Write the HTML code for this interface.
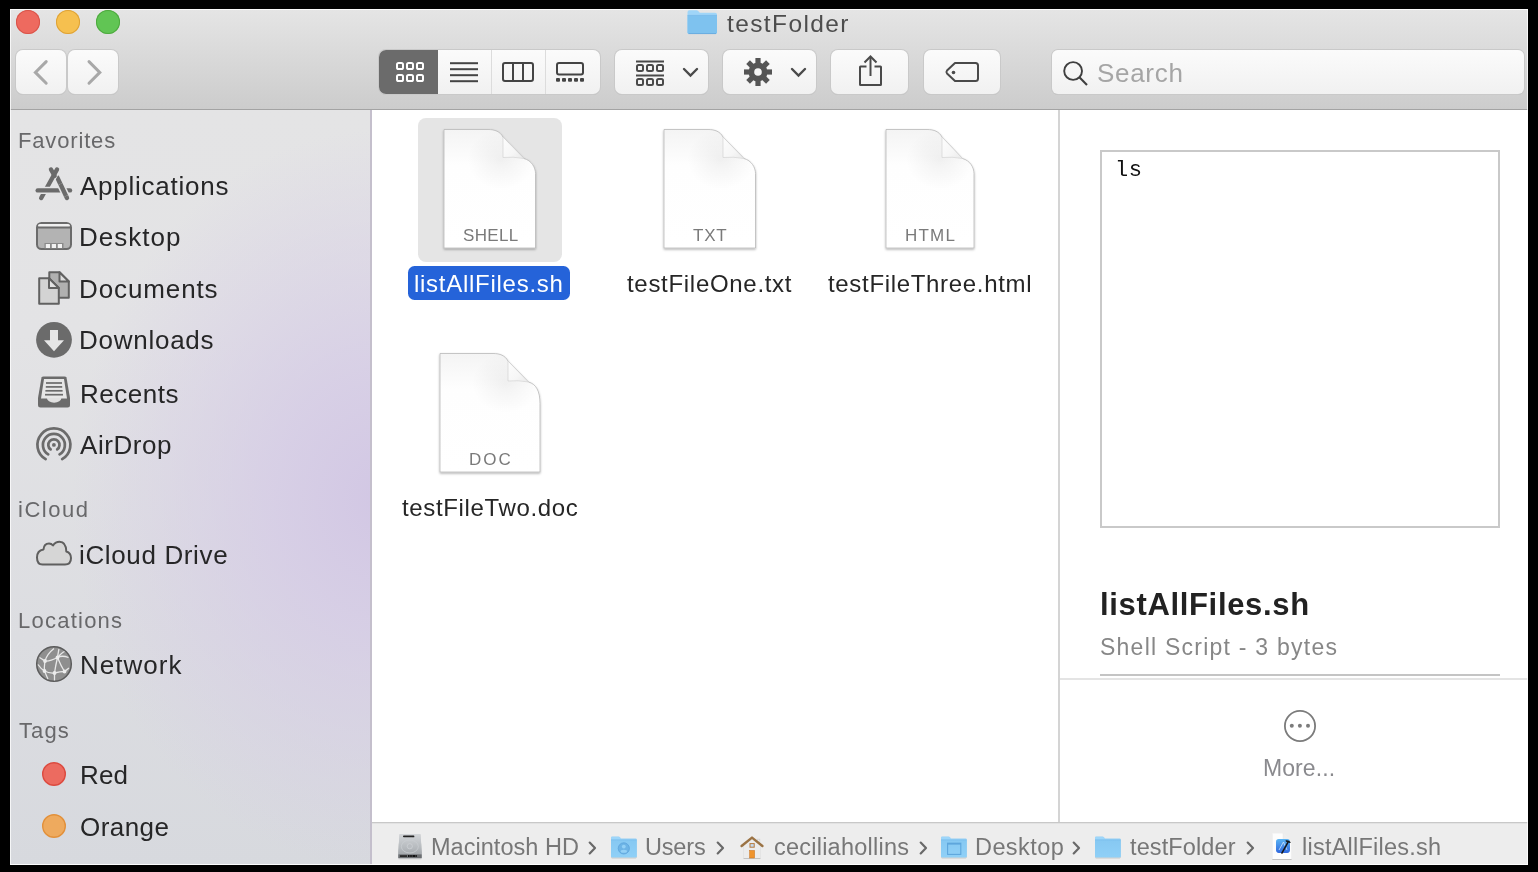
<!DOCTYPE html>
<html><head><meta charset="utf-8">
<style>
*{margin:0;padding:0;box-sizing:border-box}
html,body{width:1538px;height:872px;background:#000;overflow:hidden;font-family:"Liberation Sans",sans-serif}
.abs{position:absolute}
#win{position:absolute;left:10px;top:9px;width:1518px;height:856px;background:#fff;overflow:hidden}
#toolbar{position:absolute;left:0;top:0;width:1518px;height:101px;background:linear-gradient(#e5e5e5,#cccccc);border-bottom:1px solid #a3a3a3}
.tl{position:absolute;top:1px;width:24px;height:24px;border-radius:50%}
.btn{position:absolute;top:40.5px;height:44.5px;border-radius:7px;background:linear-gradient(#fbfbfb,#f1f1f1);box-shadow:0 0 0 1px #c9c9c9,0 1px 0 0 #b9b9b9}
.title{position:absolute;top:2px;left:716px;font-size:24.5px;letter-spacing:1.45px;color:#4d4d4d;line-height:28px}
#sidebar{position:absolute;left:0;top:101px;width:362px;height:755px;background:radial-gradient(ellipse 310px 370px at 372px 390px,#d2c7e4 0%,rgba(213,203,230,0.8) 35%,rgba(222,220,230,0) 100%),linear-gradient(#e4e4e5 0%,#e3e3e5 30%,#dcdde1 70%,#d7d9de 100%);border-right:2px solid #c4bfcc}
.hdr{position:absolute;left:9px;font-size:21px;letter-spacing:0.6px;color:#6f6f72}
.item{position:absolute;left:71px;font-size:26px;letter-spacing:0.45px;color:#282829}
.ic{position:absolute;left:26px}
#main{position:absolute;left:362px;top:101px;width:686px;height:712px;background:#fff}
#preview{position:absolute;left:1048px;top:101px;width:470px;height:712px;background:#fff;border-left:2px solid #d4d4d4}
#pathbar{position:absolute;left:362px;top:813px;width:1156px;height:43px;background:#ededed;border-top:1px solid #c8c8c8;box-shadow:inset 0 1px 0 #e2e2e2}
.pt{position:absolute;top:0;font-size:23.5px;color:#767676;line-height:42px}
.fname{position:absolute;font-size:24px;letter-spacing:0.45px;color:#262626;white-space:nowrap}
</style></head><body>
<div id="win">
  <div id="toolbar">
    <div class="tl" style="left:6px;top:1px;background:#ee6a5f;box-shadow:inset 0 0 0 1px #d9544a"></div>
    <div class="tl" style="left:46px;top:1px;background:#f6c04f;box-shadow:inset 0 0 0 1px #dea237"></div>
    <div class="tl" style="left:86px;top:1px;background:#61c554;box-shadow:inset 0 0 0 1px #4ea93f"></div>
    
    <svg class="abs" style="left:676px;top:0px" width="33" height="27" viewBox="0 0 33 27">
      <path d="M1.5 3.2 Q1.5 1.3 3.4 1.3 L10.6 1.3 Q11.6 1.3 12.4 2.2 L13.8 3.8 L29.2 3.8 Q31 3.8 31 5.6 L31 23.2 Q31 24.8 29.4 24.8 L3.1 24.8 Q1.5 24.8 1.5 23.2 Z" fill="#9fd5f8"/>
      <path d="M1.5 6.6 L31 6.6 L31 23.2 Q31 24.8 29.4 24.8 L3.1 24.8 Q1.5 24.8 1.5 23.2 Z" fill="#7ec2ef"/>
      <line x1="1.5" y1="6.4" x2="31" y2="6.4" stroke="#6fb4e4" stroke-width="0.6"/>
      <line x1="2.5" y1="24.6" x2="30" y2="24.6" stroke="#5fa5da" stroke-width="0.8"/>
    </svg>
    <!-- back/forward -->
    <div class="btn" style="left:6px;width:50px"></div>
    <div class="btn" style="left:58px;width:50px"></div>
    <svg class="abs" style="left:6px;top:41px" width="102" height="45">
      <path d="M30.2 11.6 L19.4 22.4 L30.2 33.2" fill="none" stroke="#a8a8a8" stroke-width="3" stroke-linecap="round" stroke-linejoin="miter"/>
      <path d="M73 11.6 L83.8 22.4 L73 33.2" fill="none" stroke="#a8a8a8" stroke-width="3" stroke-linecap="round" stroke-linejoin="miter"/>
    </svg>
    <!-- view segmented -->
    <div class="btn" style="left:369px;width:221px;overflow:hidden">
      <div class="abs" style="left:0;top:0;width:59px;height:45px;background:#6b6b6b"></div>
      <div class="abs" style="left:112px;top:0;width:1px;height:45px;background:#dcdcdc"></div>
      <div class="abs" style="left:166px;top:0;width:1px;height:45px;background:#dcdcdc"></div>
    </div>
    <svg class="abs" style="left:369px;top:41px" width="221" height="45">
      <g fill="none" stroke="#fff" stroke-width="2">
        <rect x="18" y="13" width="6" height="6" rx="1.6"/><rect x="28" y="13" width="6" height="6" rx="1.6"/><rect x="38" y="13" width="6" height="6" rx="1.6"/>
        <rect x="18" y="25" width="6" height="6" rx="1.6"/><rect x="28" y="25" width="6" height="6" rx="1.6"/><rect x="38" y="25" width="6" height="6" rx="1.6"/>
      </g>
      <g stroke="#444" stroke-width="2">
        <line x1="71" y1="13.2" x2="99" y2="13.2"/><line x1="71" y1="19.2" x2="99" y2="19.2"/><line x1="71" y1="25.2" x2="99" y2="25.2"/><line x1="71" y1="31.2" x2="99" y2="31.2"/>
      </g>
      <g fill="none" stroke="#444" stroke-width="2">
        <rect x="124" y="13" width="30" height="18" rx="2"/><line x1="134" y1="13" x2="134" y2="31"/><line x1="144" y1="13" x2="144" y2="31"/>
        <rect x="178" y="13" width="26" height="11.5" rx="2"/>
      </g>
      <g fill="#444">
        <rect x="177" y="28" width="4" height="3.8" rx="1"/><rect x="183" y="28" width="4" height="3.8" rx="1"/><rect x="189" y="28" width="4" height="3.8" rx="1"/><rect x="195" y="28" width="4" height="3.8" rx="1"/><rect x="201" y="28" width="4" height="3.8" rx="1"/>
      </g>
    </svg>
    <!-- group -->
    <div class="btn" style="left:605px;width:93px"></div>
    <svg class="abs" style="left:605px;top:41px" width="93" height="45">
      <g stroke="#4a4a4a" stroke-width="2">
        <line x1="21" y1="11.5" x2="49" y2="11.5"/><line x1="21" y1="25.5" x2="49" y2="25.5"/>
      </g>
      <g fill="none" stroke="#4a4a4a" stroke-width="2">
        <rect x="22" y="15" width="6" height="6" rx="1.5"/><rect x="32" y="15" width="6" height="6" rx="1.5"/><rect x="42" y="15" width="6" height="6" rx="1.5"/>
        <rect x="22" y="29" width="6" height="6" rx="1.5"/><rect x="32" y="29" width="6" height="6" rx="1.5"/><rect x="42" y="29" width="6" height="6" rx="1.5"/>
      </g>
      <path d="M69 19 L75.5 25.5 L82 19" fill="none" stroke="#4a4a4a" stroke-width="2.4" stroke-linecap="round"/>
    </svg>
    <!-- action -->
    <div class="btn" style="left:713px;width:93px"></div>
    <svg class="abs" style="left:713px;top:41px" width="93" height="45">
      <g transform="translate(35,22)" fill="#555">
        <circle r="9.5"/>
        <rect x="-2.6" y="-14" width="5.2" height="28"/>
        <rect x="-2.6" y="-14" width="5.2" height="28" transform="rotate(45)"/>
        <rect x="-2.6" y="-14" width="5.2" height="28" transform="rotate(90)"/>
        <rect x="-2.6" y="-14" width="5.2" height="28" transform="rotate(135)"/>
        <circle r="3.8" fill="#f6f6f6"/>
      </g>
      <path d="M69 19 L75.5 25.5 L82 19" fill="none" stroke="#4a4a4a" stroke-width="2.4" stroke-linecap="round"/>
    </svg>
    <!-- share -->
    <div class="btn" style="left:821px;width:77px"></div>
    <svg class="abs" style="left:821px;top:41px" width="77" height="45">
      <path d="M35.5 16.5 L29.5 16.5 Q29 16.5 29 17 L29 34.5 Q29 35 29.5 35 L49.5 35 Q50 35 50 34.5 L50 17 Q50 16.5 49.5 16.5 L43.5 16.5" fill="none" stroke="#4a4a4a" stroke-width="2" stroke-linejoin="round"/>
      <line x1="39.5" y1="7" x2="39.5" y2="26" stroke="#4a4a4a" stroke-width="2"/>
      <path d="M33.5 12.5 L39.5 6.5 L45.5 12.5" fill="none" stroke="#4a4a4a" stroke-width="2"/>
    </svg>
    <!-- tag -->
    <div class="btn" style="left:914px;width:76px"></div>
    <svg class="abs" style="left:914px;top:41px" width="76" height="45">
      <path d="M31 13 L51.5 13 Q54 13 54 15.5 L54 28.5 Q54 31 51.5 31 L31 31 L23 23.5 Q21.8 22 23 20.5 Z" fill="none" stroke="#4a4a4a" stroke-width="2" stroke-linejoin="round"/>
      <circle cx="29.5" cy="22.5" r="1.8" fill="#4a4a4a"/>
    </svg>
    <!-- search -->
    <div class="btn" style="left:1042px;width:472px;top:41px;height:44px;border-radius:6px"></div>
    <svg class="abs" style="left:1042px;top:41px" width="60" height="45">
      <circle cx="21.1" cy="21" r="8.9" fill="none" stroke="#3f3f3f" stroke-width="1.9"/>
      <line x1="27.4" y1="27.3" x2="35" y2="34.9" stroke="#3f3f3f" stroke-width="2.1" stroke-linecap="butt"/>
    </svg>

  </div>
  <div id="sidebar"></div>
  <div id="main"></div>
  <div id="preview"></div>
  <div id="pathbar"></div>
</div>
<svg class="abs" style="left:0;top:0" width="400" height="872"><g fill="none"><line x1="57.3" y1="177.5" x2="67" y2="198" stroke="#6b6b6b" stroke-width="4.4" stroke-linecap="round"/><line x1="57" y1="169.5" x2="41.2" y2="198" stroke="#e4e4e5" stroke-width="7.6" stroke-linecap="butt"/><line x1="57" y1="169.5" x2="41.2" y2="198" stroke="#6b6b6b" stroke-width="4.4" stroke-linecap="round"/><line x1="51" y1="169.5" x2="54.6" y2="175.8" stroke="#6b6b6b" stroke-width="4.4" stroke-linecap="round"/><line x1="35.5" y1="190.4" x2="72.5" y2="190.4" stroke="#e4e4e5" stroke-width="7.4" stroke-linecap="butt"/><line x1="37.7" y1="190.4" x2="70" y2="190.4" stroke="#6b6b6b" stroke-width="4.4" stroke-linecap="round"/><line x1="60.4" y1="184" x2="66.05" y2="196" stroke="#e4e4e5" stroke-width="7.6" stroke-linecap="butt"/><line x1="60.4" y1="184" x2="66.05" y2="196" stroke="#6b6b6b" stroke-width="4.4" stroke-linecap="butt"/></g>
<g>
 <rect x="37" y="223" width="34" height="26" rx="4.5" fill="#b3b3b3" stroke="#6b6b6b" stroke-width="2"/>
 <rect x="38" y="224" width="32" height="3" rx="2" fill="#f0f0f0"/>
 <line x1="37" y1="227.5" x2="71" y2="227.5" stroke="#6b6b6b" stroke-width="2"/>
 <rect x="44.5" y="243" width="19" height="5.5" fill="#8a8a8a"/>
 <rect x="45.8" y="244" width="4.2" height="4" fill="#f2f2f2"/><rect x="51.8" y="244" width="4.2" height="4" fill="#f2f2f2"/><rect x="57.8" y="244" width="4.2" height="4" fill="#f2f2f2"/>
</g>
<g stroke="#616161" stroke-width="2" stroke-linejoin="round">
 <path d="M49.3 272.2 L59.5 272.2 L68.8 281.5 L68.8 297.7 L49.3 297.7 Z" fill="#b0b0b0"/>
 <path d="M59.5 272.2 L59.5 281.5 L68.8 281.5 Z" fill="#dedede"/>
 <path d="M39.2 278.2 L49 278.2 L58.8 288 L58.8 303.7 L39.2 303.7 Z" fill="#d3d3d3"/>
 <path d="M49 278.2 L49 288 L58.8 288 Z" fill="#e2e2e2"/>
</g>
<g>
 <circle cx="54" cy="339.8" r="17.9" fill="#6b6b6b"/>
 <path d="M50 330 L58 330 L58 340.2 L64 340.2 L54 351.2 L44 340.2 L50 340.2 Z" fill="#e6e6e6"/>
</g>
<g>
 <path d="M41.5 377.5 Q42 376.5 43.5 376.5 L64.5 376.5 Q66 376.5 66.5 377.5 L70 398 L70 405 Q70 407.5 67.5 407.5 L40.5 407.5 Q38 407.5 38 405 L38 398 Z" fill="#6b6b6b"/>
 <path d="M44 379 L64 379 L67 398.5 L41 398.5 Z" fill="#e6e6e6"/>
 <g stroke="#6b6b6b" stroke-width="1.7"><line x1="46" y1="383" x2="62" y2="383"/><line x1="45.8" y1="386.9" x2="62.2" y2="386.9"/><line x1="45.4" y1="390.8" x2="62.6" y2="390.8"/><line x1="45" y1="394.7" x2="63" y2="394.7"/></g>
 <path d="M46.9 398 A7.2 4.6 0 0 0 61.4 398 Z" fill="#e0e0e0"/>
</g>
<g fill="none" stroke="#6b6b6b" stroke-width="2.7" stroke-linecap="round">
 <path d="M45.65 459.19 A16.5 16.5 0 1 1 62.15 459.19"/>
 <path d="M48.23 454.33 A11 11 0 1 1 59.57 454.33"/>
 <path d="M50.61 449.43 A5.6 5.6 0 1 1 57.19 449.43"/>
</g><circle cx="53.9" cy="444.9" r="1.9" fill="#6b6b6b"/>
<path d="M42.5 564.5 Q37 564.5 37 557.5 Q37 550.5 43.5 549.5 Q44 543.5 49 543.5 Q51.5 543.5 53 545.5 Q55.5 541.8 59.5 541.8 Q66 541.8 66.3 551.5 Q71 553 71 558 Q71 564.5 65 564.5 Z" fill="#d6d6d6" stroke="#5f5f5f" stroke-width="2" stroke-linejoin="round"/>
<g>
 <circle cx="54" cy="664" r="17.3" fill="#8f8f8f" stroke="#5c5c5c" stroke-width="1.5"/>
 <g fill="none" stroke="#e8e8e8" stroke-width="1.3">
  <path d="M39.5 657.5 Q44 660.5 45 661 Q50 661.5 57.5 657.5 Q62 655 68.5 657.5"/>
  <path d="M45 661 Q47 654 54 648.5"/>
  <path d="M45 661 Q44 668 44.5 671 Q49 673.5 54.5 673 Q60 671.5 64.5 671.5 Q66.5 670 69 668"/>
  <path d="M57.5 657.5 Q58.5 651 59 649"/>
  <path d="M57.5 657.5 Q62 652.5 64.5 651.5"/>
  <path d="M57.5 657.5 Q55.5 666 54.5 673 L54.5 680.5"/>
  <path d="M57.5 657.5 Q61 666 64.5 671.5"/>
  <path d="M38 664.5 Q41 669 44.5 671 Q47 677 48 679"/>
 </g>
 <g fill="#ececec"><circle cx="45" cy="661" r="1.9"/><circle cx="57.5" cy="657.5" r="1.9"/><circle cx="44.5" cy="671" r="1.9"/><circle cx="54.5" cy="673" r="1.9"/><circle cx="64.5" cy="671.5" r="1.9"/></g>
</g>
<circle cx="54" cy="774" r="11.3" fill="#ec6b60" stroke="#dc4a3f" stroke-width="1.4"/>
<circle cx="54" cy="826" r="11.3" fill="#eeaa5e" stroke="#e2903a" stroke-width="1.4"/></svg>
<svg class="abs" style="left:0;top:0" width="1538" height="872"><defs>
<linearGradient id="pg" x1="0" y1="0" x2="0" y2="1"><stop offset="0" stop-color="#f4f4f4"/><stop offset="0.3" stop-color="#fefefe"/><stop offset="1" stop-color="#ffffff"/></linearGradient>
<linearGradient id="fl" x1="0" y1="0" x2="1" y2="1"><stop offset="0" stop-color="#fdfdfd"/><stop offset="0.6" stop-color="#f6f6f6"/><stop offset="1" stop-color="#e9e9e9"/></linearGradient>
<radialGradient id="sh" cx="0.5" cy="0.5" r="0.5"><stop offset="0" stop-color="#000" stop-opacity="0.05"/><stop offset="0.5" stop-color="#000" stop-opacity="0.025"/><stop offset="1" stop-color="#000" stop-opacity="0"/></radialGradient>
<filter id="ds" x="-20%" y="-20%" width="140%" height="140%"><feDropShadow dx="0" dy="1.2" stdDeviation="1" flood-color="#000" flood-opacity="0.32"/></filter>
</defs>
<rect x="418" y="118" width="144" height="144" rx="8" fill="#e5e5e5"/>
<clipPath id="pc1"><path d="M444 129.5 L488 129.5 C495 129.5 500 131.5 503 137.0 L524.0 158.5 C531.5 160.5 535.5 167.5 535.5 173.5 L535.5 248.0 L444 248.0 Z"/></clipPath><path d="M444 129.5 L488 129.5 C495 129.5 500 131.5 503 137.0 L524.0 158.5 C531.5 160.5 535.5 167.5 535.5 173.5 L535.5 248.0 L444 248.0 Z" fill="url(#pg)" stroke="#b9b9b9" stroke-width="0.8" filter="url(#ds)"/><g clip-path="url(#pc1)"><ellipse cx="501" cy="159.5" rx="34" ry="30" fill="url(#sh)"/></g><path d="M503 137.0 L524.0 158.5 Q513 156.5 503 157.5 Z" fill="url(#fl)" stroke="#cfcfcf" stroke-width="0.6"/>
<clipPath id="pc2"><path d="M664 129.5 L708 129.5 C715 129.5 720 131.5 723 137.0 L744.0 158.5 C751.5 160.5 755.5 167.5 755.5 173.5 L755.5 248.0 L664 248.0 Z"/></clipPath><path d="M664 129.5 L708 129.5 C715 129.5 720 131.5 723 137.0 L744.0 158.5 C751.5 160.5 755.5 167.5 755.5 173.5 L755.5 248.0 L664 248.0 Z" fill="url(#pg)" stroke="#b9b9b9" stroke-width="0.8" filter="url(#ds)"/><g clip-path="url(#pc2)"><ellipse cx="721" cy="159.5" rx="34" ry="30" fill="url(#sh)"/></g><path d="M723 137.0 L744.0 158.5 Q733 156.5 723 157.5 Z" fill="url(#fl)" stroke="#cfcfcf" stroke-width="0.6"/>
<clipPath id="pc3"><path d="M886 129.5 L927 129.5 C934 129.5 939 131.5 942 137.0 L962.5 158.5 C970 160.5 974 167.5 974 173.5 L974 248.0 L886 248.0 Z"/></clipPath><path d="M886 129.5 L927 129.5 C934 129.5 939 131.5 942 137.0 L962.5 158.5 C970 160.5 974 167.5 974 173.5 L974 248.0 L886 248.0 Z" fill="url(#pg)" stroke="#b9b9b9" stroke-width="0.8" filter="url(#ds)"/><g clip-path="url(#pc3)"><ellipse cx="940" cy="159.5" rx="34" ry="30" fill="url(#sh)"/></g><path d="M942 137.0 L962.5 158.5 Q952 156.5 942 157.5 Z" fill="url(#fl)" stroke="#cfcfcf" stroke-width="0.6"/>
<clipPath id="pc4"><path d="M440 353.5 L493 353.5 C500 353.5 505 355.5 508 361.0 L528.5 382.0 C536 384.0 540 391.0 540 403.5 L540 472.0 L440 472.0 Z"/></clipPath><path d="M440 353.5 L493 353.5 C500 353.5 505 355.5 508 361.0 L528.5 382.0 C536 384.0 540 391.0 540 403.5 L540 472.0 L440 472.0 Z" fill="url(#pg)" stroke="#b9b9b9" stroke-width="0.8" filter="url(#ds)"/><g clip-path="url(#pc4)"><ellipse cx="506" cy="383.0" rx="34" ry="30" fill="url(#sh)"/></g><path d="M508 361.0 L528.5 382.0 Q518 380.0 508 381.0 Z" fill="url(#fl)" stroke="#cfcfcf" stroke-width="0.6"/>
<rect x="408" y="266" width="162" height="34" rx="6.5" fill="#2563d9"/></svg>
<div class="abs" style="left:1100px;top:150px;width:400px;height:378px;border:2px solid #c9c9c9;background:#fff"></div>
<div class="abs" style="left:1100px;top:674px;width:400px;height:2px;background:#c4c4c4"></div>
<div class="abs" style="left:1060px;top:678px;width:468px;height:2px;background:#e4e4e4"></div>
<svg class="abs" style="left:1280px;top:706px" width="40" height="40"><circle cx="20" cy="20" r="15.1" fill="none" stroke="#7b7b7b" stroke-width="1.8"/><circle cx="11.8" cy="19.8" r="2" fill="#7b7b7b"/><circle cx="19.9" cy="19.8" r="2" fill="#7b7b7b"/><circle cx="28" cy="19.8" r="2" fill="#7b7b7b"/></svg>
<svg class="abs" style="left:0;top:0" width="1538" height="872"><defs><linearGradient id="hd" x1="0" y1="0" x2="0" y2="1"><stop offset="0" stop-color="#d3d6d9"/><stop offset="0.6" stop-color="#b4b8bc"/><stop offset="1" stop-color="#9a9ea2"/></linearGradient><linearGradient id="fd" x1="0" y1="0" x2="0" y2="1"><stop offset="0" stop-color="#86c8f2"/><stop offset="1" stop-color="#8fd0f7"/></linearGradient><linearGradient id="xc" x1="0" y1="0" x2="0" y2="1"><stop offset="0" stop-color="#5ab4f4"/><stop offset="1" stop-color="#2f68de"/></linearGradient><filter id="ds2" x="-20%" y="-20%" width="140%" height="140%"><feDropShadow dx="0" dy="0.6" stdDeviation="0.5" flood-color="#000" flood-opacity="0.3"/></filter></defs>
<g filter="url(#ds2)"><path d="M399.5 834 L420.5 834 L421.8 852 L421.8 857.5 Q421.8 858.2 421 858.2 L399 858.2 Q398.2 858.2 398.2 857.5 L398.2 852 Z" fill="url(#hd)"/></g>
<rect x="403" y="835.6" width="10.5" height="1.6" rx="0.8" fill="#222"/><circle cx="413.5" cy="836.4" r="0.9" fill="#222"/>
<ellipse cx="409.8" cy="846.5" rx="8.5" ry="6.5" fill="none" stroke="#c9cdd0" stroke-width="0.8"/><circle cx="409.8" cy="846.3" r="2.6" fill="#b9bdc1" stroke="#d8dbde" stroke-width="0.5"/>
<rect x="398.4" y="854.4" width="23.2" height="3.6" fill="#6b6e71"/><rect x="400" y="855.2" width="7" height="1.8" fill="#2a2a2a"/><rect x="408" y="855" width="1.6" height="2" fill="#111"/><rect x="410.2" y="855" width="1.6" height="2" fill="#111"/><rect x="412.4" y="855" width="2.6" height="2" fill="#111"/><rect x="415.4" y="855" width="1.4" height="2" fill="#111"/>
<path d="M589.7 842.6 L595 848 L589.7 853.4" fill="none" stroke="#696969" stroke-width="2.2" stroke-linecap="round" stroke-linejoin="round"/>
<path d="M717.7 842.6 L723 848 L717.7 853.4" fill="none" stroke="#696969" stroke-width="2.2" stroke-linecap="round" stroke-linejoin="round"/>
<path d="M920.7 842.6 L926 848 L920.7 853.4" fill="none" stroke="#696969" stroke-width="2.2" stroke-linecap="round" stroke-linejoin="round"/>
<path d="M1073.7 842.6 L1079 848 L1073.7 853.4" fill="none" stroke="#696969" stroke-width="2.2" stroke-linecap="round" stroke-linejoin="round"/>
<path d="M1247.7 842.6 L1253 848 L1247.7 853.4" fill="none" stroke="#696969" stroke-width="2.2" stroke-linecap="round" stroke-linejoin="round"/>
<g filter="url(#ds2)"><path d="M611 837.6 Q611 836.4 612.2 836.4 L618.5 836.4 Q619.3 836.4 620 837.1999999999999 L621 838.4 L635.7 838.4 Q636.7 838.4 636.7 839.4 L636.7 856.1999999999999 Q636.7 857.1999999999999 635.7 857.1999999999999 L612 857.1999999999999 Q611 857.1999999999999 611 856.1999999999999 Z" fill="#9dd6fa"/><path d="M611 840.0 L636.7 840.0 L636.7 856.1999999999999 Q636.7 857.1999999999999 635.7 857.1999999999999 L612 857.1999999999999 Q611 857.1999999999999 611 856.1999999999999 Z" fill="url(#fd)"/><line x1="611" y1="839.8" x2="636.7" y2="839.8" stroke="#6fb6e6" stroke-width="0.6"/></g>
<circle cx="623.8" cy="848.4" r="5.6" fill="#6db4e6" stroke="#5aa2da" stroke-width="0.8"/><circle cx="623.8" cy="846.6" r="1.9" fill="#93d0f6"/><ellipse cx="623.8" cy="851.2" rx="3.2" ry="1.5" fill="#93d0f6"/>
<g filter="url(#ds2)"><path d="M743.5 845 L752 839 L760.5 845 L760.5 858 L743.5 858 Z" fill="#ececec"/></g>
<rect x="757.2" y="839.2" width="2.6" height="3.4" fill="none" stroke="#d0d0d0" stroke-width="0.7"/>
<path d="M741.6 846 L752 837.6 L762.4 846" fill="none" stroke="#9b7344" stroke-width="2.4" stroke-linecap="round" stroke-linejoin="round"/>
<rect x="750" y="843.6" width="4.2" height="3.6" fill="#c4dcf4" stroke="#b87a3a" stroke-width="1"/><rect x="749.6" y="850.4" width="5" height="7.6" fill="#ef942d" stroke="#c7731f" stroke-width="0.5"/>
<g filter="url(#ds2)"><path d="M941 837.6 Q941 836.4 942.2 836.4 L948.5 836.4 Q949.3 836.4 950 837.1999999999999 L951 838.4 L965.7 838.4 Q966.7 838.4 966.7 839.4 L966.7 856.1999999999999 Q966.7 857.1999999999999 965.7 857.1999999999999 L942 857.1999999999999 Q941 857.1999999999999 941 856.1999999999999 Z" fill="#9dd6fa"/><path d="M941 840.0 L966.7 840.0 L966.7 856.1999999999999 Q966.7 857.1999999999999 965.7 857.1999999999999 L942 857.1999999999999 Q941 857.1999999999999 941 856.1999999999999 Z" fill="url(#fd)"/><line x1="941" y1="839.8" x2="966.7" y2="839.8" stroke="#6fb6e6" stroke-width="0.6"/></g>
<rect x="947.6" y="843.2" width="13.2" height="11.2" fill="none" stroke="#5ea6dc" stroke-width="1.1"/><rect x="947.6" y="843" width="13.2" height="1.6" fill="#5ea6dc"/>
<g filter="url(#ds2)"><path d="M1095 837.6 Q1095 836.4 1096.2 836.4 L1102.5 836.4 Q1103.3 836.4 1104 837.1999999999999 L1105 838.4 L1119.7 838.4 Q1120.7 838.4 1120.7 839.4 L1120.7 856.1999999999999 Q1120.7 857.1999999999999 1119.7 857.1999999999999 L1096 857.1999999999999 Q1095 857.1999999999999 1095 856.1999999999999 Z" fill="#9dd6fa"/><path d="M1095 840.0 L1120.7 840.0 L1120.7 856.1999999999999 Q1120.7 857.1999999999999 1119.7 857.1999999999999 L1096 857.1999999999999 Q1095 857.1999999999999 1095 856.1999999999999 Z" fill="url(#fd)"/><line x1="1095" y1="839.8" x2="1120.7" y2="839.8" stroke="#6fb6e6" stroke-width="0.6"/></g>
<g filter="url(#ds2)"><path d="M1272.3 833.2 L1283 833.2 L1291.6 841.6 L1291.6 859.1 L1272.3 859.1 Z" fill="#fdfdfd"/></g>
<path d="M1283 833.2 L1283 841.6 L1291.6 841.6" fill="#eeeeee" stroke="#e2e2e2" stroke-width="0.4"/>
<rect x="1276" y="838.9" width="14" height="14" rx="2.8" fill="url(#xc)"/><path d="M1279 850 L1283.5 842 L1287 850" fill="none" stroke="#cfe6fb" stroke-width="1" opacity="0.8"/>
<line x1="1281.6" y1="853.6" x2="1288.6" y2="841.2" stroke="#151515" stroke-width="1.5"/><path d="M1285.4 840.4 Q1288.5 839.6 1291 842.6 L1289.6 842.9 Q1287.8 841.6 1286.2 841.9 Z" fill="#151515"/></svg>
<div class="abs" style="left:17.95px;top:129.65px;font-family:'Liberation Sans';font-size:22px;line-height:22px;color:#68686a;letter-spacing:0.836px;font-weight:400;white-space:pre;will-change:transform;">Favorites</div>
<div class="abs" style="left:79.95px;top:172.85px;font-family:'Liberation Sans';font-size:26px;line-height:26px;color:#262627;letter-spacing:0.756px;font-weight:400;white-space:pre;will-change:transform;">Applications</div>
<div class="abs" style="left:78.95px;top:224.25px;font-family:'Liberation Sans';font-size:26px;line-height:26px;color:#262627;letter-spacing:0.999px;font-weight:400;white-space:pre;will-change:transform;">Desktop</div>
<div class="abs" style="left:78.75px;top:276.05px;font-family:'Liberation Sans';font-size:26px;line-height:26px;color:#262627;letter-spacing:0.886px;font-weight:400;white-space:pre;will-change:transform;">Documents</div>
<div class="abs" style="left:78.75px;top:327.25px;font-family:'Liberation Sans';font-size:26px;line-height:26px;color:#262627;letter-spacing:0.739px;font-weight:400;white-space:pre;will-change:transform;">Downloads</div>
<div class="abs" style="left:79.55px;top:380.65px;font-family:'Liberation Sans';font-size:26px;line-height:26px;color:#262627;letter-spacing:0.532px;font-weight:400;white-space:pre;will-change:transform;">Recents</div>
<div class="abs" style="left:80.15px;top:431.85px;font-family:'Liberation Sans';font-size:26px;line-height:26px;color:#262627;letter-spacing:0.563px;font-weight:400;white-space:pre;will-change:transform;">AirDrop</div>
<div class="abs" style="left:17.75px;top:499.25px;font-family:'Liberation Sans';font-size:22px;line-height:22px;color:#68686a;letter-spacing:1.52px;font-weight:400;white-space:pre;will-change:transform;">iCloud</div>
<div class="abs" style="left:78.95px;top:542.05px;font-family:'Liberation Sans';font-size:26px;line-height:26px;color:#262627;letter-spacing:0.639px;font-weight:400;white-space:pre;will-change:transform;">iCloud Drive</div>
<div class="abs" style="left:17.75px;top:610.25px;font-family:'Liberation Sans';font-size:22px;line-height:22px;color:#68686a;letter-spacing:1.239px;font-weight:400;white-space:pre;will-change:transform;">Locations</div>
<div class="abs" style="left:79.75px;top:652.45px;font-family:'Liberation Sans';font-size:26px;line-height:26px;color:#262627;letter-spacing:1.015px;font-weight:400;white-space:pre;will-change:transform;">Network</div>
<div class="abs" style="left:18.55px;top:720.25px;font-family:'Liberation Sans';font-size:22px;line-height:22px;color:#68686a;letter-spacing:1.105px;font-weight:400;white-space:pre;will-change:transform;">Tags</div>
<div class="abs" style="left:79.55px;top:761.85px;font-family:'Liberation Sans';font-size:26px;line-height:26px;color:#262627;letter-spacing:0.1px;font-weight:400;white-space:pre;will-change:transform;">Red</div>
<div class="abs" style="left:79.55px;top:814.25px;font-family:'Liberation Sans';font-size:26px;line-height:26px;color:#262627;letter-spacing:0.44px;font-weight:400;white-space:pre;will-change:transform;">Orange</div>
<div class="abs" style="left:414.15px;top:272.25px;font-family:'Liberation Sans';font-size:24px;line-height:24px;color:#ffffff;letter-spacing:0.725px;font-weight:400;white-space:pre;will-change:transform;">listAllFiles.sh</div>
<div class="abs" style="left:626.75px;top:272.35px;font-family:'Liberation Sans';font-size:24px;line-height:24px;color:#262626;letter-spacing:0.697px;font-weight:400;white-space:pre;will-change:transform;">testFileOne.txt</div>
<div class="abs" style="left:827.85px;top:272.35px;font-family:'Liberation Sans';font-size:24px;line-height:24px;color:#262626;letter-spacing:0.674px;font-weight:400;white-space:pre;will-change:transform;">testFileThree.html</div>
<div class="abs" style="left:401.95px;top:496.35px;font-family:'Liberation Sans';font-size:24px;line-height:24px;color:#262626;letter-spacing:0.637px;font-weight:400;white-space:pre;will-change:transform;">testFileTwo.doc</div>
<div class="abs" style="left:462.95px;top:227.25px;font-family:'Liberation Sans';font-size:17px;line-height:17px;color:#7a7a7a;letter-spacing:0.325px;font-weight:400;white-space:pre;will-change:transform;">SHELL</div>
<div class="abs" style="left:693.05px;top:226.55px;font-family:'Liberation Sans';font-size:17px;line-height:17px;color:#7a7a7a;letter-spacing:0.75px;font-weight:400;white-space:pre;will-change:transform;">TXT</div>
<div class="abs" style="left:904.75px;top:226.85px;font-family:'Liberation Sans';font-size:17px;line-height:17px;color:#7a7a7a;letter-spacing:1.203px;font-weight:400;white-space:pre;will-change:transform;">HTML</div>
<div class="abs" style="left:469.25px;top:450.95px;font-family:'Liberation Sans';font-size:17px;line-height:17px;color:#7a7a7a;letter-spacing:1.95px;font-weight:400;white-space:pre;will-change:transform;">DOC</div>
<div class="abs" style="left:1099.95px;top:589.25px;font-family:'Liberation Sans';font-size:31px;line-height:31px;color:#222222;letter-spacing:0.66px;font-weight:700;white-space:pre;will-change:transform;">listAllFiles.sh</div>
<div class="abs" style="left:1100.25px;top:635.85px;font-family:'Liberation Sans';font-size:23px;line-height:23px;color:#878787;letter-spacing:1.238px;font-weight:400;white-space:pre;will-change:transform;">Shell Script - 3 bytes</div>
<div class="abs" style="left:1263.25px;top:757.05px;font-family:'Liberation Sans';font-size:23px;line-height:23px;color:#8a8a8e;letter-spacing:0.083px;font-weight:400;white-space:pre;will-change:transform;">More...</div>
<div class="abs" style="left:1115.45px;top:160.25px;font-family:'Liberation Mono';font-size:22px;line-height:22px;color:#111111;letter-spacing:0.6px;font-weight:400;white-space:pre;will-change:transform;">ls</div>
<div class="abs" style="left:431.15px;top:836.05px;font-family:'Liberation Sans';font-size:23.5px;line-height:23.5px;color:#777777;letter-spacing:0.033px;font-weight:400;white-space:pre;will-change:transform;">Macintosh HD</div>
<div class="abs" style="left:645.35px;top:836.05px;font-family:'Liberation Sans';font-size:23.5px;line-height:23.5px;color:#777777;letter-spacing:-0.175px;font-weight:400;white-space:pre;will-change:transform;">Users</div>
<div class="abs" style="left:773.75px;top:836.05px;font-family:'Liberation Sans';font-size:23.5px;line-height:23.5px;color:#777777;letter-spacing:0.231px;font-weight:400;white-space:pre;will-change:transform;">ceciliahollins</div>
<div class="abs" style="left:974.95px;top:836.05px;font-family:'Liberation Sans';font-size:23.5px;line-height:23.5px;color:#777777;letter-spacing:0.417px;font-weight:400;white-space:pre;will-change:transform;">Desktop</div>
<div class="abs" style="left:1130.45px;top:836.05px;font-family:'Liberation Sans';font-size:23.5px;line-height:23.5px;color:#777777;letter-spacing:0.111px;font-weight:400;white-space:pre;will-change:transform;">testFolder</div>
<div class="abs" style="left:1302.15px;top:836.05px;font-family:'Liberation Sans';font-size:23.5px;line-height:23.5px;color:#777777;letter-spacing:0.232px;font-weight:400;white-space:pre;will-change:transform;">listAllFiles.sh</div>
<div class="abs" style="left:726.55px;top:12.05px;font-family:'Liberation Sans';font-size:24.5px;line-height:24.5px;color:#4d4d4d;letter-spacing:1.392px;font-weight:400;white-space:pre;will-change:transform;">testFolder</div>
<div class="abs" style="left:1097.35px;top:60.25px;font-family:'Liberation Sans';font-size:26px;line-height:26px;color:#a5a5a5;letter-spacing:0.7px;font-weight:400;white-space:pre;will-change:transform;">Search</div>
<div class="abs" id="winoutline" style="left:10px;top:9px;width:1518px;height:856px;border:1px solid rgba(255,255,255,0.75);border-bottom-color:rgba(255,255,255,0.9)"></div>
</body></html>
